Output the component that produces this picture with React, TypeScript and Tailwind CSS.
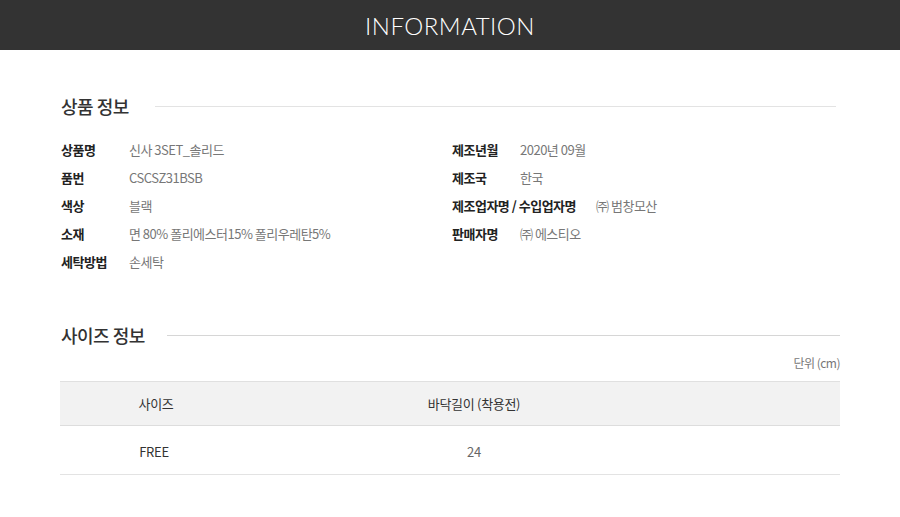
import React from "react";

const font = { fontFamily: '"Noto Sans CJK KR", "Noto Sans", sans-serif' };

function Row({ label, value }: { label: string; value: string }) {
  return (
    <div className="flex h-[28px] items-center text-[13px] leading-none">
      <span className="min-w-[68px] pr-[20px] font-bold text-[#222] tracking-[-0.5px]">{label}</span>
      <span className="text-[#777] tracking-[-0.5px]">{value}</span>
    </div>
  );
}

export default function App() {
  return (
    <div className="w-[900px] h-[517px] bg-white" style={font}>
      <div className="h-[50px] bg-[#333333] flex items-center justify-center">
        <span
          className="text-white text-[24px] font-light tracking-[0.5px] pt-[2px]"
          style={{ fontFamily: 'Lato, "Noto Sans", sans-serif' }}
        >
          INFORMATION
        </span>
      </div>

      <div className="pl-[61px] pr-[64px] pt-[44px]">
        <div className="flex items-center h-[24px]">
          <h2 className="text-[18px] font-medium text-[#333] tracking-[-0.5px] mr-[26px]">상품 정보</h2>
          <div className="flex-1 h-px bg-[#e3e3e3]" />
        </div>
      </div>

      <div className="pl-[61px] pt-[17px] grid grid-cols-[391px_1fr]">
        <div className="flex flex-col">
          <Row label="상품명" value="신사 3SET_솔리드" />
          <Row label="품번" value="CSCSZ31BSB" />
          <Row label="색상" value="블랙" />
          <Row label="소재" value="면 80% 폴리에스터15% 폴리우레탄5%" />
          <Row label="세탁방법" value="손세탁" />
        </div>
        <div className="flex flex-col">
          <Row label="제조년월" value="2020년 09월" />
          <Row label="제조국" value="한국" />
          <Row label="제조업자명 / 수입업자명" value="㈜ 범창모산" />
          <Row label="판매자명" value="㈜ 에스티오" />
        </div>
      </div>

      <div className="pl-[61px] pr-[60px] pt-[48px]">
        <div className="flex items-center h-[24px]">
          <h2 className="text-[18px] font-medium text-[#333] tracking-[-0.5px] mr-[22px]">사이즈 정보</h2>
          <div className="flex-1 h-px bg-[#d6d6d6]" />
        </div>
      </div>

      <div className="pl-[60px] pr-[60px]">
        <div className="h-[22px] flex items-end justify-end text-[12px] text-[#777] tracking-[-0.5px] leading-none">
          단위 (cm)
        </div>
        <div className="mt-[12px] border-t border-[#e0e0e0]">
          <div className="grid grid-cols-[192px_444px_1fr] h-[44px] items-center bg-[#f2f2f2] border-b border-[#dddddd] text-[13px] text-[#333] tracking-[-0.3px]">
            <span className="text-center">사이즈</span>
            <span className="text-center">바닥길이 (착용전)</span>
            <span />
          </div>
          <div className="grid grid-cols-[192px_444px_1fr] h-[49px] pt-[4px] items-center border-b border-[#e3e3e3] text-[13px] tracking-[-0.3px]">
            <span className="text-center text-[#333] pr-[4px]">FREE</span>
            <span className="text-center text-[#666]">24</span>
            <span />
          </div>
        </div>
      </div>
    </div>
  );
}
